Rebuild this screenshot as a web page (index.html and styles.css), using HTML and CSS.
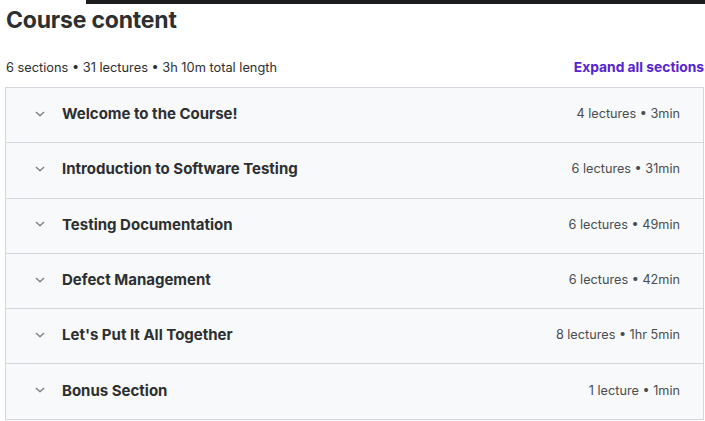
FILE: index.html
```html
<!DOCTYPE html>
<html lang="en">
<head>
<meta charset="utf-8">
<title>Course content</title>
<link rel="stylesheet" href="styles.css">
</head>
<body>
<div class="topstrip"><div class="topstrip-gap"></div><div class="topstrip-bar"></div></div>
<h2 class="heading">Course content</h2>
<div class="summary">
  <span class="stats">6 sections • 31 lectures • 3h 10m total length</span>
  <button class="expand">Expand all sections</button>
</div>
<div class="accordion">
  <div class="section"><span class="chev"><svg viewBox="0 0 12 12" width="10" height="10"><path d="M1.5 4l4.5 4.2 4.5-4.2" fill="none" stroke="currentColor" stroke-width="1.6" stroke-linecap="round" stroke-linejoin="round"/></svg></span><span class="title">Welcome to the Course!</span><span class="meta">4 lectures • 3min</span></div>
  <div class="section"><span class="chev"><svg viewBox="0 0 12 12" width="10" height="10"><path d="M1.5 4l4.5 4.2 4.5-4.2" fill="none" stroke="currentColor" stroke-width="1.6" stroke-linecap="round" stroke-linejoin="round"/></svg></span><span class="title">Introduction to Software Testing</span><span class="meta">6 lectures • 31min</span></div>
  <div class="section"><span class="chev"><svg viewBox="0 0 12 12" width="10" height="10"><path d="M1.5 4l4.5 4.2 4.5-4.2" fill="none" stroke="currentColor" stroke-width="1.6" stroke-linecap="round" stroke-linejoin="round"/></svg></span><span class="title">Testing Documentation</span><span class="meta">6 lectures • 49min</span></div>
  <div class="section"><span class="chev"><svg viewBox="0 0 12 12" width="10" height="10"><path d="M1.5 4l4.5 4.2 4.5-4.2" fill="none" stroke="currentColor" stroke-width="1.6" stroke-linecap="round" stroke-linejoin="round"/></svg></span><span class="title">Defect Management</span><span class="meta">6 lectures • 42min</span></div>
  <div class="section"><span class="chev"><svg viewBox="0 0 12 12" width="10" height="10"><path d="M1.5 4l4.5 4.2 4.5-4.2" fill="none" stroke="currentColor" stroke-width="1.6" stroke-linecap="round" stroke-linejoin="round"/></svg></span><span class="title">Let's Put It All Together</span><span class="meta">8 lectures • 1hr 5min</span></div>
  <div class="section"><span class="chev"><svg viewBox="0 0 12 12" width="10" height="10"><path d="M1.5 4l4.5 4.2 4.5-4.2" fill="none" stroke="currentColor" stroke-width="1.6" stroke-linecap="round" stroke-linejoin="round"/></svg></span><span class="title">Bonus Section</span><span class="meta">1 lecture • 1min</span></div>
</div>
</body>
</html>
```
FILE: styles.css
```css
* { box-sizing: border-box; }
html, body { margin: 0; padding: 0; background: #fff; }
body {
  font-family: Inter, "Noto Sans", "DejaVu Sans", sans-serif;
  color: #2d2f31;
  width: 705px;
  height: 421px;
  overflow: hidden;
}
.topstrip { display: flex; height: 4px; }
.topstrip-gap { width: 86px; }
.topstrip-bar { flex: 1; background: #1c1d1f; }
.heading {
  margin: 0;
  padding: 2px 0 0 6px;
  font-size: 23px;
  font-weight: 700;
  line-height: 28px;
  letter-spacing: -0.2px;
}
.summary {
  display: flex;
  justify-content: space-between;
  align-items: center;
  margin-top: 23px;
  padding: 0 1px 0 6px;
  height: 20px;
}
.stats { font-size: 12.8px; color: #2d2f31; }
.expand {
  border: 0;
  background: none;
  padding: 0;
  font-family: inherit;
  font-size: 13.8px;
  font-weight: 700;
  color: #5624d0;
  margin-top: -1px;
}
.accordion {
  margin: 10px 1px 0 5px;
  border: 1px solid #d1d7dc;
  border-bottom: 0;
}
.section {
  display: flex;
  align-items: center;
  height: 55.3px;
  padding: 0 23px 3px 28px;
  background: #f7f9fa;
  border-bottom: 1px solid #d1d7dc;
}
.chev { display: flex; width: 28px; padding-left: 1px; color: #7a7f83; }
.title { flex: 1; font-size: 15px; font-weight: 700; }
.meta { font-size: 12.7px; color: #4a4d50; }
```
